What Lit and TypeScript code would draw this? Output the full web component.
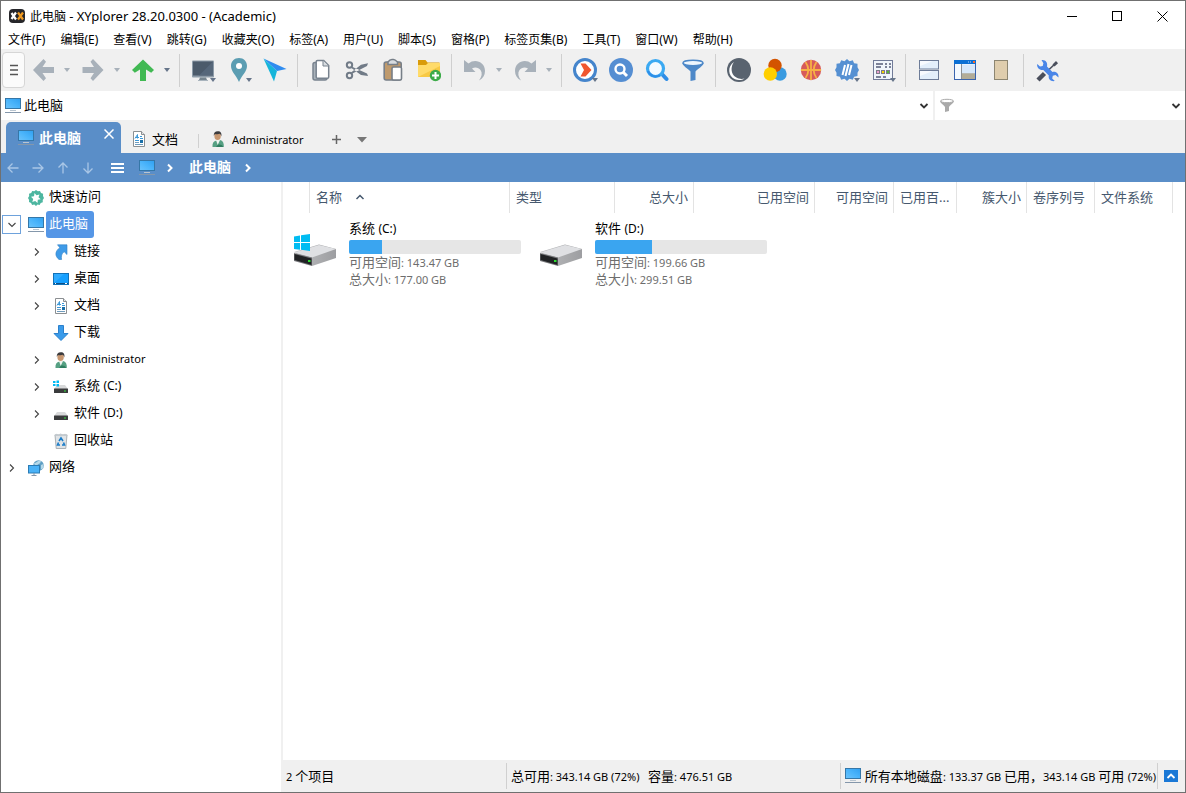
import { LitElement, html, css, svg, nothing } from "lit";
import { customElement } from "lit/decorators.js";

/* ---------- text helper: Latin runs are set in a smaller companion size ---------- */
const mixed = (s: string) =>
  s.split(/([\x21-\x7e][\x20-\x7e]*)/).filter(Boolean).map((part) =>
    /^[\x21-\x7e]/.test(part) ? html`<span class="latin">${part}</span>` : part
  );

const icon = (size: number, body: unknown, box = size) =>
  html`<svg width=${size} height=${size} viewBox="0 0 ${box} ${box}" aria-hidden="true">${body}</svg>`;

/* ---------- small icons, 16px ---------- */
const monitor16 = () => icon(16, svg`
  <defs><linearGradient id="m" x1="0" y1="1" x2="1" y2="0"><stop offset="0" stop-color="#6cc4fc"/><stop offset=".5" stop-color="#4ab4fb"/><stop offset="1" stop-color="#2f9ff0"/></linearGradient></defs>
  <rect x=".5" y=".5" width="15" height="10" fill="url(#m)" stroke="#3577a8"/>
  <path d="M5 12.500h6" stroke="#b9c5d0"/><path d="M0 14.500h16" stroke="#8497ab"/>`);

const doc16 = () => icon(16, svg`
  <path d="M2.500.5h8l3 3v12h-11z" fill="#fff" stroke="#8b8f92"/><path d="M10.500.5v3h3" fill="#e3e6e8" stroke="#8b8f92"/>
  <path d="M4 7.500l2.500-4v4M4 6.500h4" stroke="#3b98d8" fill="none"/><path d="M9 5.500h2M9 7.500h3M4 9.500h4" stroke="#3b98d8"/>
  <path d="M4 11.500h4M4 13.500h8" stroke="#6f9cbd"/><rect x="9" y="9" width="3" height="3" fill="#1a6fa8"/>`);

const user16 = () => icon(16, svg`
  <path d="M2.500 16c-.3-4 1-6 4-6.500L10 9c3 .7 4 3 3.800 7z" fill="#56a083"/><path d="M6 9l1.700 5L10 9z" fill="#eef3ef"/>
  <path d="M7.700 14c2-1 4-.5 5.500 2H6z" fill="#2f7d60"/>
  <ellipse cx="7.600" cy="5" rx="3.200" ry="4" fill="#c79770"/><path d="M3.800 5C3.500 2 5 .2 7.800.2c3 0 4.200 2 3.500 5.300-.3-1.500-.8-2.300-1.500-2.700-2 .8-4 .3-4.800.2-.7.600-.9 1.200-1.200 2z" fill="#3b3b3d"/>`);

const gear16 = () => icon(16, svg`
  <path d="M8 0l1.800 1.300 2.200-.4 1 2 2.100.9-.1 2.200L16 8l-1.300 1.900.1 2.300-2.100.8-1.100 2-2.100-.4L8 16l-1.700-1.400-2.200.3-1-2-2.100-.8.100-2.200L0 8l1.200-1.900L1 3.800l2.200-.9 1-2 2.100.4z" fill="#4db6a0"/>
  <path d="M6.500 3l2 2.300 3-.8-1 2.800 2.200 1.900-2.900.6-.3 3.200L7.200 11l-2.900 1 .9-3L3 6.800l3-.5z" fill="#fff"/>`);

const link16 = () => icon(16, svg`
  <path d="M4.500.8H14v9.700L11.200 7.800C8.500 9.500 8 12.500 8.600 15.500H6C1.500 12 2 7 6.800 3.700z" fill="#3f9be8" stroke="#2f7fc4" stroke-width=".6"/>`);

const desktop16 = () => icon(16, svg`
  <rect x=".5" y="2.500" width="15" height="11" fill="#16a0ff" stroke="#1272b8"/><path d="M1 12.500h14" stroke="#0b4f86"/><path d="M2 12.500h1M12 12.500h2" stroke="#fff"/><path d="M1 12L11 3H1z" fill="#48b6ff" opacity=".5"/>`);

const download16 = () => icon(16, svg`<path d="M5.500.5h5v8H15L8 15.500 1 8.500h4.500z" fill="#3a9bea" stroke="#2b80cc"/>`);

const drive16 = (win: boolean) => icon(16, svg`
  <path d="M4 6h8l3 4H1z" fill="#d8d9da"/><rect x="1" y="9.500" width="14" height="4.500" rx=".5" fill="#3a3b3c"/><rect x="11" y="11.500" width="2" height="1" fill="#35e23d"/>
  ${win ? svg`<path d="M0 2h2.500v2H0zM3.500 1.500H6V4H3.500zM0 5h2.500v2H0zM3.500 5H6v2.500H3.500z" fill="#00b9f2"/>` : nothing}`);

const bin16 = () => icon(16, svg`
  <path d="M2 2h12l-1.200 13.500H3.200z" fill="#dfe3e6" stroke="#9aa1a6" stroke-width=".8"/><path d="M1.500 1.800l2-1 2 .6 2-1 2.500 1 2-.7 2.500 1v1H1.500z" fill="#c4cacf"/>
  <path d="M6 8l2-3 2 3M5.500 9.500l-1 2.500h2.500M10.500 9.500l1 2.500H9" fill="none" stroke="#1a7cc8" stroke-width="1.600"/>`);

const network16 = () => icon(16, svg`
  <circle cx="10.500" cy="5.500" r="5.300" fill="#5f9fc4"/><path d="M6 3c2 .5 3-1.500 5-2.500l2 .7-1 2-2.500 1.500L8 8zM13 5l2.500-1v4L13 9.500z" fill="#b6d8e8"/>
  <rect x=".5" y="5.500" width="11" height="7.500" fill="#4ab2f7" stroke="#2b7cb5"/><path d="M6 13v2M3.500 15.500h5" stroke="#8497ab"/>`);

/* ---------- drive picture for the tiles ---------- */
const bigDrive = (win: boolean) => html`<svg width="48" height="36" viewBox="0 0 48 36" aria-hidden="true">
  <defs><linearGradient id="s" x1="0" x2="1"><stop offset="0" stop-color="#bcbdbf"/><stop offset="1" stop-color="#9d9ea1"/></linearGradient></defs>
  <path d="M2 19L27 11.500 44 16v9L20 33z" fill="url(#s)"/><path d="M2 19.500L27 12 44 16 20 24.500z" fill="#dfe0e3"/>
  <path d="M2 20L20 24.500V33L2 28z" fill="#77787b"/><path d="M2.500 21l17 4.500V32l-17-5z" fill="#202224"/><rect x="16" y="27" width="2.500" height="2" fill="#2bdc30"/>
  ${win ? svg`<path d="M2 3.500L8 2.500V9H2zM9 2.300L18 1v8H9zM2 10h6v6.700l-6-.8zM9 10h9v8l-9-1.200z" fill="#00bcf2"/>` : nothing}
</svg>`;

/* ---------- toolbar icons, 24px ---------- */
const tb = (body: unknown) => icon(24, body);
const gray = "#a8b1ba";
const T: Record<string, unknown> = {
  back: tb(svg`<path d="M2 12L12.500 1 15 3.800 11.500 9H23v6H11.500L15 20.200 12.500 23z" fill=${gray}/>`),
  forward: tb(svg`<path d="M22.500 12L12 1 9.500 3.800 13 9H1.500v6H13L9.500 20.200 12 23z" fill=${gray}/>`),
  up: tb(svg`<path d="M12 1.500L23 12l-2.800 2.800L15 11.500V23H9V11.500L3.800 14.800 1 12z" fill="#41b953"/>`),
  monitor: tb(svg`<rect x="1" y="2.500" width="22" height="17" rx="1" fill="#8d9ba8"/><rect x="2" y="3.500" width="20" height="14" fill="#4c5b6b"/><path d="M22 3.500L8 17.500h14z" fill="#56677a"/><path d="M9 19.500h6l1 2.500H8z" fill="#77858f"/><path d="M7 22.500h10" stroke="#a9b4bd"/>`),
  pin: tb(svg`<path d="M12 0c4.700 0 8 3.500 8 8 0 5.500-5 9-8 16C9 17 4 13.500 4 8c0-4.500 3.300-8 8-8z" fill="#5b9db2"/><circle cx="12" cy="8" r="3" fill="#fff"/>`),
  plane: tb(svg`<path d="M.5.500L23.500 11 14 13z" fill="#2f8cf0"/><path d="M.5.500L14 13 11 23.500z" fill="#16b5da"/>`),
  copy: tb(svg`<path d="M7 4.500H6c-1.500 0-2 .7-2 2V20c0 1.500.7 2 2 2h10c1.300 0 2-.6 2-1.700" fill="#a9b2ba" stroke="#78838f" stroke-width="1.500"/><path d="M8.500 2.500h6.200l5 5V19c0 .8-.5 1.300-1.300 1.300H8.500c-.8 0-1.300-.5-1.300-1.300V3.800c0-.8.500-1.300 1.300-1.300z" fill="#fff" stroke="#78838f" stroke-width="1.500"/><path d="M14 2.500V8h5.500" fill="#d8dde1" stroke="#78838f"/>`),
  cut: tb(svg`<g fill="none" stroke="#717b87" stroke-width="2"><circle cx="4.500" cy="7" r="2.700"/><circle cx="4.500" cy="17.500" r="2.700"/></g><path d="M6.500 8.500L22 15.500l1 2.500-7-1L6 9.800zM6.500 16L22 8l1-2.700-7 1.500L6 14.500z" fill="#717b87"/><circle cx="12.500" cy="12" r="1" fill="#eee"/>`),
  paste: tb(svg`<rect x="3.200" y="4" width="17" height="18" rx="2" fill="#bf9a6d" stroke="#777f88" stroke-width="1.600"/><path d="M7 6.500V4c1-1.500 2.500-2.500 4-2.500h1.500C14 1.500 15.500 3 16.500 4v2.500z" fill="#d8dce0" stroke="#777f88" stroke-width="1.500"/><rect x="11" y="9" width="9.500" height="13" rx="1.500" fill="#fff" stroke="#777f88" stroke-width="1.600"/>`),
  folder: tb(svg`<path d="M1 2h7.500l2 2.500h12V8H1z" fill="#d99b0a"/><path d="M1 7h8l2-2h12v14H1z" fill="#ffdb6a"/><path d="M1 19L23 8v11z" fill="#f8c944"/><circle cx="18.500" cy="17.500" r="5.700" fill="#3dab49"/><path d="M18.500 14v7M15 17.500h7" stroke="#fff" stroke-width="2"/>`),
  undo: tb(svg`<path d="M1 2l4.500 3.500C12 0 22 4 22 13c0 4-2 7.500-6 9.500 3-4 3.500-7.500 1.500-10.500-2-2.700-5.500-3.300-8.500-1.500L12.500 14H1z" fill=${gray}/>`),
  redo: tb(svg`<path d="M23 2l-4.500 3.500C12 0 2 4 2 13c0 4 2 7.500 6 9.500-3-4-3.500-7.500-1.500-10.500 2-2.700 5.500-3.300 8.500-1.500L11.500 14H23z" fill=${gray}/>`),
  run: tb(svg`<circle cx="12" cy="12" r="10.500" fill="#fff" stroke="#4585cc" stroke-width="3"/><path d="M7.500 5.500h5L18.500 12l-6 6.500h-5L11 12z" fill="#f0562f"/>`),
  find: tb(svg`<circle cx="12" cy="12" r="12" fill="#558ed2"/><circle cx="11" cy="11" r="4.500" fill="none" stroke="#fff" stroke-width="2.400"/><path d="M14 14l4 4" stroke="#fff" stroke-width="3"/>`),
  lens: tb(svg`<path d="M16 15l5.500 6" stroke="#2f8de6" stroke-width="4" stroke-linecap="round"/><circle cx="10.500" cy="10.500" r="8" fill="#f4faff" stroke="#3ba9f2" stroke-width="3.200"/><path d="M3 13a8 8 0 0 0 12 4" fill="none" stroke="#2d8de8" stroke-width="2"/>`),
  filter: tb(svg`<path d="M1.500 5c0 3 6 6 8 8.500V23l5-1v-8.500c2-2.500 8-5.500 8-8.500z" fill="#4d88c8"/><ellipse cx="12" cy="5" rx="10" ry="2.700" fill="#eef6fd" stroke="#4d88c8" stroke-width="1.500"/>`),
  moon: tb(svg`<circle cx="12" cy="12" r="12" fill="#59636f"/><path d="M7 4C.5 8 .5 18 8 21.300c3 1.200 7 1 9.500-.8-3 .8-6 .3-8.500-1.200C3.500 16 3.500 8.500 7 4z" fill="#fff"/>`),
  balls: tb(svg`<circle cx="17" cy="16" r="6.700" fill="#3a9be0"/><circle cx="12" cy="7.500" r="6.700" fill="#d35400"/><circle cx="7.300" cy="16" r="6.700" fill="#ffcf00"/>`),
  basket: tb(svg`<circle cx="12" cy="12" r="10.200" fill="#d75a5a"/><path d="M12 2v20M2 12h20M6.500 4c3.500 5 3.500 11 0 16M17.500 4c-3.500 5-3.500 11 0 16" fill="none" stroke="#f7b045" stroke-width="1.800"/>`),
  badge: tb(svg`<path d="M12 1l2.500 2.200 3.300-.9 1.300 3 3.400.5v3.500L24 12l-1.500 2.700v3.400l-3.400.6-1.300 3-3.300-.9L12 23l-2.500-2.200-3.300.9-1.300-3-3.400-.6v-3.400L0 12l1.500-2.700V5.800l3.400-.5 1.300-3 3.300.9z" fill="#5590d2"/><path d="M10 7L7.500 17M13.500 6l-3 12M16.500 7L14 17" stroke="#fff" stroke-width="2"/>`),
  calendar: tb(svg`<rect x="2.500" y="2.500" width="19" height="19" fill="#f0f5fb" stroke="#717b98"/><path d="M5 6h7M14 6h2M18 6h2M5 9h5M14 9h2M18 9h2M5 19h5M12 19h3" stroke="#7c8298" stroke-width="2"/><g stroke="#7c7c88"><rect x="5.500" y="12.500" width="3" height="3" fill="#e99fd0"/><rect x="10.500" y="12.500" width="3" height="3" fill="#f5d400"/><rect x="15.500" y="12.500" width="3" height="3" fill="#55bb3a"/></g>`),
  split: tb(svg`<rect x="2.500" y="2.500" width="19" height="8.500" fill="#e3effb" stroke="#6d7c98"/><rect x="2.500" y="12.500" width="19" height="9" fill="#e3effb" stroke="#6d7c98"/><path d="M3 8L16 3H3zM3 18l13-5H3z" fill="#fff" opacity=".7"/>`),
  panes: tb(svg`<rect x="1.500" y="2.500" width="21" height="19" fill="#f4f9fe" stroke="#3a64ae"/><rect x="1" y="2" width="22" height="4" fill="#0b6fd4"/><path d="M15 4h1M17 4h1" stroke="#bcdcff"/><path d="M20 4h2" stroke="#ff6b2a" stroke-width="2"/><path d="M8.500 6v15M9 15h13" stroke="#8a8f96"/><rect x="9" y="6.500" width="13" height="8.500" fill="#d7e8fb"/><rect x="9" y="15.500" width="13" height="5.500" fill="#b2ac98"/>`),
  sheet: tb(svg`<rect x="5.500" y="2.500" width="13" height="19" fill="#dfcdad" stroke="#8d8671"/>`),
  tools: tb(svg`<path d="M21.500 4.500L13 12.500" stroke="#4a4f5c" stroke-width="1.600"/><path d="M18.500 7.500L22 4.200" stroke="#4a4f5c" stroke-width="3"/><path d="M9.500 15.500l-6.500 6.500" stroke="#4a4f5c" stroke-width="4.500"/><path d="M6.500 2c4-.5 6.500 2.500 5.500 6.500l5.500 5.500c4-.8 6.500 2 6 5.500L20.500 17l-2.700.7-.6 2.700 2.600 2.600c-4 .8-6.800-2-6-5.600L8.300 12C4.500 12.500 1.500 9.500 2.200 6l2.800 2.600 2.700-.7.700-2.700z" fill="#4a86e8"/>`),
};

const chevron = (dir: "down" | "right" | "up", color: string, w = 1.5) =>
  html`<svg width="10" height="10" viewBox="0 0 10 10" aria-hidden="true"><path fill="none" stroke=${color} stroke-width=${w}
    d=${dir === "down" ? "M1.500 3L5 6.500 8.500 3" : dir === "up" ? "M1.500 7L5 3.500 8.500 7" : "M3 1.500L6.500 5 3 8.500"} /></svg>`;

const thinArrow = (deg: number) => html`<svg width="12" height="12" viewBox="0 0 12 12" aria-hidden="true">
  <path transform="rotate(${deg} 6 6)" d="M11.500 6H1.500M5.500 1.500L1 6l4.500 4.500" fill="none" stroke="#a9c6e6" stroke-width="1.300"/></svg>`;

type Tool = [string, string, ("side" | "corner" | "")?];
const groups: Tool[][] = [
  [["back", "后退", "side"], ["forward", "前进", "side"], ["up", "向上", "side"]],
  [["monitor", "驱动器", "corner"], ["pin", "位置", "corner"], ["plane", "转到"]],
  [["copy", "复制"], ["cut", "剪切"], ["paste", "粘贴"], ["folder", "新建文件夹"]],
  [["undo", "撤销", "side"], ["redo", "重做", "side"]],
  [["run", "运行", "corner"], ["find", "查找"], ["lens", "搜索"], ["filter", "过滤"]],
  [["moon", "深色模式"], ["balls", "颜色"], ["basket", "幽灵过滤"], ["badge", "标签", "corner"], ["calendar", "视图", "corner"]],
  [["split", "双窗格"], ["panes", "面板"], ["sheet", "预览"]],
  [["tools", "配置"]],
];
const menus = ["文件(F)", "编辑(E)", "查看(V)", "跳转(G)", "收藏夹(O)", "标签(A)", "用户(U)", "脚本(S)", "窗格(P)", "标签页集(B)", "工具(T)", "窗口(W)", "帮助(H)"];

@customElement("xy-toolbar")
class XyToolbar extends LitElement {
  static styles = css`
    :host { display: flex; align-items: center; height: 42px; background: #f0f0f0; padding-left: 1px; overflow: hidden; }
    button { border: 0; padding: 0; background: none; position: relative; display: flex; align-items: center; justify-content: center; flex: none; }
    svg { display: block; }
    .grip { width: 23px; height: 36px; background: #fbfbfb; border: 1px solid #d6d6d6; border-radius: 4px; }
    .tool { width: 36px; height: 36px; }
    .drop { width: 14px; height: 36px; }
    .drop svg { margin-right: 2px; }
    .corner { position: absolute; right: 5px; bottom: 6px; }
    .sep { flex: none; width: 1px; height: 33px; background: #cfcfcf; margin: 0 5px 0 4px; }
  `;
  private caret(color: string, cls = "") {
    return html`<svg class=${cls} width="6" height="4" viewBox="0 0 6 4" aria-hidden="true"><path d="M0 0h6L3 4z" fill=${color} /></svg>`;
  }
  render() {
    return html`
      <button class="grip" aria-label="菜单"><svg width="8" height="12" viewBox="0 0 8 12"><path d="M0 1.500h8M0 6h8M0 10.500h8" stroke="#555" stroke-width="1.600"/></svg></button>
      ${groups.map((g, i) => html`
        ${i ? html`<div class="sep"></div>` : nothing}
        ${g.map(([id, label, drop]) => html`
          <button class="tool" aria-label=${label}>${T[id]}${drop === "corner" ? this.caret("#66758a", "corner") : nothing}</button>
          ${drop === "side" ? html`<button class="drop" aria-label="${label}列表">${this.caret(id === "up" ? "#66758a" : "#a8b1ba")}</button>` : nothing}`)}`)}
    `;
  }
}

type Node = { label: string; icon: unknown; level: number; open?: boolean; leaf?: boolean; selected?: boolean };
const tree: Node[] = [
  { label: "快速访问", icon: gear16(), level: 0, leaf: true },
  { label: "此电脑", icon: monitor16(), level: 0, open: true, selected: true },
  { label: "链接", icon: link16(), level: 1 },
  { label: "桌面", icon: desktop16(), level: 1 },
  { label: "文档", icon: doc16(), level: 1 },
  { label: "下载", icon: download16(), level: 1, leaf: true },
  { label: "Administrator", icon: user16(), level: 1 },
  { label: "系统 (C:)", icon: drive16(true), level: 1 },
  { label: "软件 (D:)", icon: drive16(false), level: 1 },
  { label: "回收站", icon: bin16(), level: 1, leaf: true },
  { label: "网络", icon: network16(), level: 0 },
];

@customElement("xy-tree")
class XyTree extends LitElement {
  static styles = css`
    :host { display: block; padding-top: 2px; background: #fff; color: #000; font-size: 13px; overflow: hidden; }
    svg { display: block; }
    .row { display: flex; align-items: center; height: 27px; }
    .level1 { padding-left: 25px; }
    .toggle { box-sizing: border-box; width: 19px; height: 19px; margin: 0 7px 0 1px; padding: 0; border: 1px solid transparent; background: none; display: flex; align-items: center; justify-content: center; }
    .open { border-color: #6ea2dc; background: #fff; }
    .leaf { visibility: hidden; }
    .label { box-sizing: border-box; height: 27px; line-height: 25px; padding: 0 6px 0 3px; margin-left: 2px; border-radius: 3px; white-space: pre; }
    .selected { background: #5596e6; color: #fff; }
    .latin { font-size: 11px; }
    .drive .latin { font-size: 12px; }
  `;
  render() {
    return tree.map((n) => html`
      <div class="row level${n.level}" role="treeitem" aria-selected=${n.selected ? "true" : "false"}>
        <button class="toggle ${n.open ? "open" : ""} ${n.leaf ? "leaf" : ""}" aria-label="展开 ${n.label}">${chevron(n.open ? "down" : "right", "#444", 1.1)}</button>
        ${n.icon}
        <span class="label ${n.selected ? "selected" : ""} ${n.label.endsWith(":)") ? "drive" : ""}">${mixed(n.label)}</span>
      </div>`);
  }
}

@customElement("xy-list")
class XyList extends LitElement {
  static styles = css`
    :host { display: block; background: #fff; font-size: 13px; overflow: hidden; }
    svg { display: block; }
    .head { display: grid; grid-template-columns: 27px 200px 105px 79px 121px 79px 63px 70px 68px 78px; height: 31px; }
    .head > * { border: 0; border-right: 1px solid #e3e3e3; }
    .col { font: inherit; color: #46586e; background: none; padding: 0 5px 2px 6px; text-align: left; display: flex; align-items: center; gap: 13px; white-space: nowrap; }
    .end { justify-content: flex-end; padding-left: 0; }
    .tiles { display: flex; flex-wrap: wrap; padding: 7px 0 0 9px; }
    .tile { width: 246px; display: flex; align-items: flex-start; }
    .tile > svg { margin: 13px 9px 0 0; }
    .info { width: 172px; color: #6d6d6d; line-height: 17px; }
    .bar { height: 14px; background: #e6e6e6; border-radius: 2px; overflow: hidden; margin: 3px 0 0; }
    .fill { height: 14px; background: #3aa5f0; }
    .latin { font-size: 11px; }
    .name { color: #000; }
    .name .latin { font-size: 12px; }
  `;
  private tile(name: string, used: number, free: string, total: string, win: boolean) {
    return html`<div class="tile">${bigDrive(win)}
      <div class="info"><div class="name">${mixed(name)}</div>
        <div class="bar" role="meter" aria-label="已用空间" aria-valuemin="0" aria-valuemax="100" aria-valuenow=${used}><div class="fill" style="width:${used}%"></div></div>
        <div>${mixed("可用空间: " + free)}</div><div>${mixed("总大小: " + total)}</div></div></div>`;
  }
  render() {
    const right = ["总大小", "已用空间", "可用空间"];
    return html`
      <div class="head"><span></span>
        <button class="col">名称 ${chevron("up", "#46586e")}</button><button class="col">类型</button>
        ${right.map((c) => html`<button class="col end">${c}</button>`)}
        <button class="col">已用百...</button><button class="col end">簇大小</button><button class="col">卷序列号</button><button class="col">文件系统</button>
      </div>
      <div class="tiles">${this.tile("系统 (C:)", 19, "143.47 GB", "177.00 GB", true)}${this.tile("软件 (D:)", 33, "199.66 GB", "299.51 GB", false)}</div>`;
  }
}

@customElement("app-root")
class AppRoot extends LitElement {
  static styles = css`
    :host { display: flex; flex-direction: column; box-sizing: border-box; height: 100vh; border: 1px solid #707070; background: #fff; color: #000;
      font-family: "Noto Sans", "Noto Sans CJK SC", sans-serif; font-size: 13px; overflow: hidden; }
    * { box-sizing: border-box; }
    svg { display: block; flex: none; }
    button, input { font: inherit; color: inherit; border: 0; padding: 0; background: none; margin: 0; }
    button { display: flex; align-items: center; justify-content: center; }
    .title { display: flex; align-items: center; height: 30px; font-size: 12px; padding-left: 8px; }
    .title h1 { font: inherit; margin: 0 auto 0 5px; white-space: pre; }
    .title .latin { font-size: 13px; }
    .win { width: 45px; height: 29px; }
    .menu { display: flex; height: 18px; padding-left: 7px; gap: 15px; font-size: 12px; line-height: 20px; white-space: nowrap; }
    .address { display: flex; height: 29px; background: #f0f0f0; gap: 2px; }
    .field { display: flex; align-items: center; background: #fff; padding: 0 4px 0 4px; gap: 3px; min-width: 0; }
    .field input { flex: 1; min-width: 0; outline: 0; padding-bottom: 2px; }
    .path { flex: 1; }
    .filter { flex: 0 0 250px; }
    .tabs { display: flex; height: 33px; background: #f0f0f0; padding: 2px 0 0 5px; }
    .tab { display: flex; align-items: center; gap: 5px; padding: 3px 0 0 10px; color: #000; }
    .tab > span { padding-bottom: 2px; }
    .user { gap: 6px; padding-left: 11px; }
    .user > span { padding-bottom: 0; }
    .active { width: 115px; background: #5a8ec8; color: #fff; font-weight: bold; font-size: 14px; border-radius: 5px 5px 0 0; padding: 0 7px 0 12px; }
    .active .close { margin: 0 0 8px auto; }
    .rule { width: 1px; height: 14px; background: #d0d0d0; margin: 12px 0 0 20px; }
    .plus { margin: 4px 0 0 29px; }
    .more { margin: 4px 0 0 16px; }
    .crumbs { display: flex; align-items: center; height: 29px; background: #5a8ec8; color: #fff; padding-left: 6px; }
    .nav { display: flex; gap: 13px; margin-right: 17px; }
    .here { font-weight: bold; font-size: 14px; margin: 0 12px 0 14px; padding-bottom: 3px; }
    .device { margin: 0 10px 0 15px; }
    .body { flex: 1; display: flex; min-height: 0; }
    xy-tree { width: 280px; }
    .main { flex: 1; min-width: 0; display: flex; flex-direction: column; border-left: 2px solid #f0f0f0; }
    xy-list { flex: 1; }
    .status { display: flex; align-items: center; height: 32px; background: #f0f0f0; }
    .cell { height: 26px; display: flex; align-items: center; padding-left: 4px; border-right: 1px solid #d0d0d0; white-space: pre; }
    .cell > span { padding-bottom: 2px; }
    .count { width: 224px; padding-left: 3px; }
    .space { flex: 1; }
    .disks { padding-right: 1px; gap: 4px; }
    .expand { width: 14px; height: 12px; background: #1a78d6; margin: 0 7px 0 6px; }
    .latin { font-size: 11px; }
  `;
  render() {
    return html`
      <header class="title">
        <svg width="16" height="16" viewBox="0 0 16 16" aria-hidden="true"><rect y="1" width="16" height="14" rx="4" fill="#26262a"/><path d="M2.500 5l4.500 6.500M7 4.500L2.500 11" stroke="#fff" stroke-width="2.200"/><path d="M9 4.500l5 7M14 4.500L9 11.500" stroke="#f09a20" stroke-width="2.200"/></svg>
        <h1>${mixed("此电脑 - XYplorer 28.20.0300 - (Academic)")}</h1>
        <button class="win" aria-label="最小化"><svg width="11" height="11"><path d="M0 5.500h10" stroke="#000"/></svg></button>
        <button class="win" aria-label="最大化"><svg width="11" height="11"><rect x=".5" y=".5" width="9" height="9" fill="none" stroke="#000"/></svg></button>
        <button class="win" aria-label="关闭"><svg width="11" height="11"><path d="M.5.500l10 10M10.500.5l-10 10" stroke="#000"/></svg></button>
      </header>
      <nav class="menu">${menus.map((m) => html`<button>${m}</button>`)}</nav>
      <xy-toolbar></xy-toolbar>
      <div class="address">
        <div class="field path">${monitor16()}<input aria-label="地址" .value=${"此电脑"} /><button aria-label="历史">${chevron("down", "#333", 1.8)}</button></div>
        <div class="field filter">
          <svg width="16" height="16" viewBox="0 0 16 16" aria-hidden="true"><path d="M1 3c0 2 4 4 5 6v5l4-1V9c1-2 5-4 5-6z" fill="#a9a9a9"/><ellipse cx="8" cy="3" rx="6.500" ry="1.700" fill="#fff" stroke="#a9a9a9"/></svg>
          <input aria-label="过滤" /><button aria-label="过滤历史">${chevron("down", "#333", 1.8)}</button></div>
      </div>
      <div class="tabs">
        <div class="tab active">${monitor16()}<span>此电脑</span><button class="close" aria-label="关闭标签"><svg width="10" height="10"><path d="M.5.500l9 9M9.500.5l-9 9" stroke="#fff" stroke-width="1.500"/></svg></button></div>
        <button class="tab">${doc16()}<span>文档</span></button>
        <div class="rule"></div>
        <button class="tab user">${user16()}<span class="latin">Administrator</span></button>
        <button class="plus" aria-label="新标签"><svg width="9" height="9"><path d="M0 4.500h9M4.500 0v9" stroke="#666" stroke-width="1.500"/></svg></button>
        <button class="more" aria-label="标签列表"><svg width="10" height="6"><path d="M0 0h10L5 5.500z" fill="#777"/></svg></button>
      </div>
      <div class="crumbs">
        <div class="nav">${[["后退", 0], ["前进", 180], ["向上", 90], ["向下", 270]].map(([l, d]) => html`<button aria-label=${l}>${thinArrow(d as number)}</button>`)}</div>
        <button aria-label="面包屑菜单"><svg width="13" height="12"><path d="M0 2h13M0 6h13M0 10h13" stroke="#fff" stroke-width="2"/></svg></button>
        <span class="device">${monitor16()}</span>${chevron("right", "#fff", 2)}
        <span class="here">此电脑</span>${chevron("right", "#fff", 2)}
      </div>
      <div class="body">
        <xy-tree role="tree"></xy-tree>
        <div class="main">
          <xy-list></xy-list>
          <footer class="status">
            <div class="cell count"><span>${mixed("2 ")}${mixed("个项目")}</span></div>
            <div class="cell space"><span>${mixed("总可用: 343.14 GB (72%)   ")}${mixed("容量: 476.51 GB")}</span></div>
            <div class="cell disks">${monitor16()}<span>${mixed("所有本地磁盘: 133.37 GB 已用，343.14 GB 可用 (72%)")}</span></div>
            <button class="expand" aria-label="展开">${chevron("up", "#fff", 1.8)}</button>
          </footer>
        </div>
      </div>`;
  }
}
